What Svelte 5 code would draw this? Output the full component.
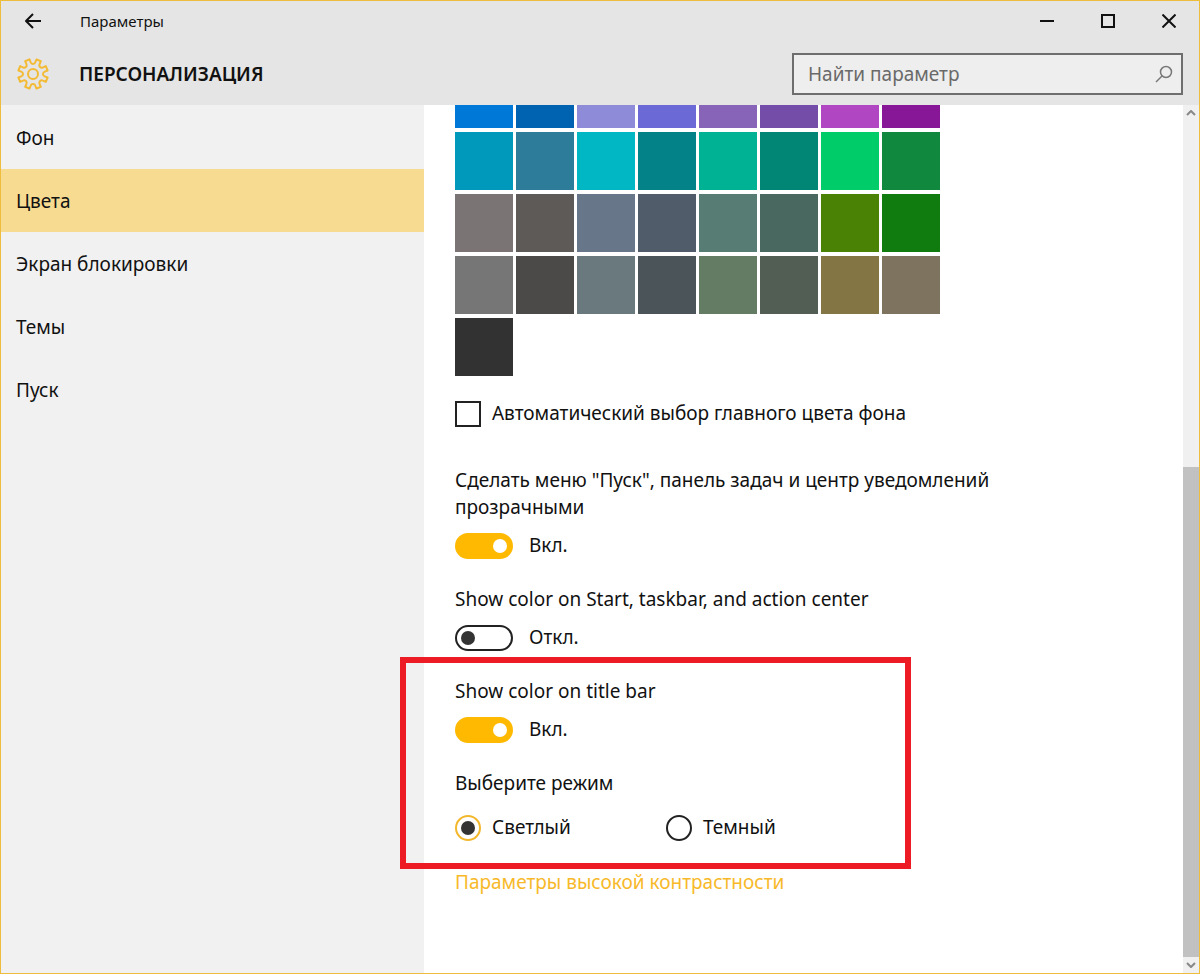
<script lang="ts">
  interface NavItem { id: string; label: string; }

  interface Toggle { id: string; label: string; on: boolean; }

  const navItems: NavItem[] = [
    { id: 'background', label: 'Фон' },
    { id: 'colors', label: 'Цвета' },
    { id: 'lockscreen', label: 'Экран блокировки' },
    { id: 'themes', label: 'Темы' },
    { id: 'start', label: 'Пуск' },
  ];

  const SWATCHES = [
    '#0078d7', '#0063b1', '#8e8cd8', '#6b69d6', '#8764b8', '#744da9', '#b146c2', '#881798',
    '#0099bc', '#2d7d9a', '#00b7c3', '#038387', '#00b294', '#018574', '#00cc6a', '#10893e',
    '#7a7574', '#5d5a58', '#68768a', '#515c6b', '#567c73', '#486860', '#498205', '#107c10',
    '#767676', '#4c4a48', '#69797e', '#4a5459', '#647c64', '#525e54', '#847545', '#7e735f',
    '#323232',
  ];

  const modes = [
    { value: 'light', label: 'Светлый' },
    { value: 'dark', label: 'Темный' },
  ];

  let active = $state('colors');
  let query = $state('');
  let accent = $state('');
  let autoPick = $state(false);
  let mode = $state('light');

  let taskbar = $state<Toggle[]>([
    { id: 'transparent', label: 'Сделать меню "Пуск", панель задач и центр уведомлений прозрачными', on: true },
    { id: 'show-start', label: 'Show color on Start, taskbar, and action center', on: false },
  ]);
  let titleBar = $state<Toggle>({ id: 'show-title', label: 'Show color on title bar', on: true });

  function polar(deg: number, r: number): string {
    const a = (deg * Math.PI) / 180;
    return `${(17 + r * Math.cos(a)).toFixed(2)} ${(17 + r * Math.sin(a)).toFixed(2)}`;
  }

  // eight flat teeth with a round notch between each pair
  function gearPath(): string {
    let d = '';
    for (let i = 0; i < 8; i++) {
      const c = 22.5 + i * 45;
      d += `${i === 0 ? 'M' : 'L'}${polar(c - 11, 12)}L${polar(c - 9, 15)}L${polar(c + 9, 15)}L${polar(c + 11, 12)}`;
      d += `A2.500 2.500 0 0 0 ${polar(c + 34, 12)}`;
    }
    return d + 'Z';
  }
</script>

{#snippet toggleRow(t: Toggle)}
  <div class="setting">
    <label class="setting-label" for={t.id}>{t.label}</label>
    <div class="toggle-row">
      <input class="toggle" type="checkbox" role="switch" id={t.id} bind:checked={t.on} />
      <span>{t.on ? 'Вкл.' : 'Откл.'}</span>
    </div>
  </div>
{/snippet}

<div class="window">
  <header>
    <div class="titlebar">
      <button class="back" aria-label="Назад">
        <svg width="18" height="16" viewBox="0 0 18 16"><path d="M17 8H2M9 1 2 8l7 7" /></svg>
      </button>
      <span class="title">Параметры</span>
      <div class="controls">
        <button aria-label="Свернуть">
          <svg width="14" height="14" viewBox="0 0 14 14"><path d="M0 7h14" /></svg>
        </button>
        <button aria-label="Развернуть">
          <svg width="14" height="14" viewBox="0 0 14 14"><path d="M1 1h12v12H1z" /></svg>
        </button>
        <button aria-label="Закрыть">
          <svg width="14" height="14" viewBox="0 0 14 14"><path d="m.5.5 13 13M13.5.5l-13 13" /></svg>
        </button>
      </div>
    </div>
    <div class="heading">
      <svg class="gear" width="34" height="34" viewBox="0 0 34 34">
        <path d={gearPath()} />
        <circle cx="17" cy="17" r="5" />
      </svg>
      <h1>Персонализация</h1>
      <div class="search">
        <input type="text" aria-label="Найти параметр" placeholder="Найти параметр" bind:value={query} />
        <button aria-label="Поиск">
          <svg width="18" height="18" viewBox="0 0 18 18"><circle cx="11" cy="7" r="5.5" /><path d="M7 11 1 17" /></svg>
        </button>
      </div>
    </div>
  </header>

  <div class="body">
    <nav>
      {#each navItems as item}
        <button class="nav-item" class:active={active === item.id} onclick={() => (active = item.id)}>{item.label}</button>
      {/each}
    </nav>

    <main>
      <div class="swatches">
        {#each SWATCHES as color}
          <button class="swatch" style="background: {color}" aria-label={color} onclick={() => (accent = color)}></button>
        {/each}
      </div>

      <label class="option auto-pick">
        <input type="checkbox" class="box" bind:checked={autoPick} />
        Автоматический выбор главного цвета фона
      </label>

      {#each taskbar as t}
        {@render toggleRow(t)}
      {/each}

      <section class="highlight">
        {@render toggleRow(titleBar)}
        <fieldset>
          <legend>Выберите режим</legend>
          <div class="modes">
            {#each modes as m}
              <label class="option">
                <input type="radio" class="radio" name="mode" value={m.value} bind:group={mode} />
                {m.label}
              </label>
            {/each}
          </div>
        </fieldset>
      </section>

      <a href="#contrast">Параметры высокой контрастности</a>
    </main>

    <div class="scrollbar">
      <button aria-label="Вверх">
        <svg width="10" height="6" viewBox="0 0 10 6"><path d="m1 5 4-4 4 4" /></svg>
      </button>
      <div class="track"><div class="thumb"></div></div>
      <button aria-label="Вниз">
        <svg width="10" height="6" viewBox="0 0 10 6"><path d="m1 1 4 4 4-4" /></svg>
      </button>
    </div>
  </div>
</div>

<style>
  :global(body) { margin: 0; }
  .window {
    display: flex;
    flex-direction: column;
    box-sizing: border-box;
    min-height: 100vh;
    border: 1px solid #efbd3d;
    background: #fff;
    color: #111;
    font-family: 'Noto Sans', 'Open Sans', sans-serif;
    font-size: 19px;
    line-height: 27px;
  }
  button, input {
    margin: 0;
    padding: 0;
    border: none;
    background: none;
    color: inherit;
    font: inherit;
  }
  svg {
    display: block;
    fill: none;
    stroke: currentColor;
    stroke-width: 2;
    stroke-linejoin: round;
  }
  header { background: #e5e5e5; }
  .titlebar {
    display: flex;
    align-items: center;
    height: 40px;
  }
  .back, .controls button {
    display: flex;
    align-items: center;
    justify-content: center;
    height: 100%;
  }
  .back { width: 64px; }
  .title {
    flex: 1;
    padding-left: 15px;
    font-size: 15px;
  }
  .controls {
    display: flex;
    height: 100%;
  }
  .controls button { width: 61px; }
  .controls svg { stroke-linejoin: miter; }
  .heading {
    display: flex;
    align-items: center;
    box-sizing: border-box;
    height: 64px;
    padding: 2px 16px 0 15px;
  }
  .gear { color: #f3bb35; }
  h1 {
    flex: 1;
    margin: 0 0 0 29px;
    font-size: 19px;
    font-weight: 600;
    text-transform: uppercase;
  }
  .search {
    display: flex;
    align-items: center;
    box-sizing: border-box;
    width: 391px;
    height: 42px;
    border: 2px solid #6e6e6e;
    background: #eee;
    color: #777;
  }
  .search input {
    flex: 1;
    min-width: 0;
    padding-left: 14px;
    outline: none;
  }
  .search input::placeholder {
    color: #6a6a6a;
    opacity: 1;
  }
  .search button { padding: 8px; }
  .search svg { stroke-width: 1.5; }
  .body {
    display: flex;
    flex: 1;
  }
  nav {
    display: flex;
    flex-direction: column;
    width: 423px;
    flex-shrink: 0;
    padding-top: 1px;
    background: #f1f1f1;
  }
  .nav-item {
    height: 63px;
    padding: 2px 15px 0;
    text-align: left;
  }
  .nav-item.active { background: #f7db91; }
  main {
    flex: 1;
    padding: 0 31px 64px;
  }
  /* the first row is scrolled halfway under the header */
  .swatches {
    display: grid;
    grid-template-columns: repeat(8, 58px);
    grid-template-rows: 23px;
    grid-auto-rows: 58px;
    gap: 4px 3px;
  }
  .option {
    display: flex;
    align-items: center;
    gap: 11px;
  }
  .auto-pick { margin: 24px 0 40px; }
  .box, .radio, .toggle {
    appearance: none;
    box-sizing: border-box;
    flex-shrink: 0;
    width: 26px;
    height: 26px;
    border: 2px solid #222;
  }
  .box:checked { background: #ffb900; }
  .radio, .toggle {
    display: flex;
    align-items: center;
    border-radius: 13px;
  }
  .radio { justify-content: center; }
  .radio:checked { border-color: #f3b72c; }
  .radio:checked::before, .toggle::before {
    content: '';
    width: 14px;
    height: 14px;
    border-radius: 50%;
    background: #333;
  }
  .toggle {
    width: 58px;
    padding: 0 4px;
  }
  .toggle:checked {
    justify-content: flex-end;
    border-color: #ffb900;
    background: #ffb900;
  }
  .toggle:checked::before { background: #fff; }
  .setting { margin-bottom: 27px; }
  .setting-label {
    display: block;
    max-width: 560px;
    margin-bottom: 11px;
  }
  .toggle-row {
    display: flex;
    align-items: center;
    gap: 16px;
  }
  .highlight { position: relative; }
  .highlight::after {
    content: '';
    position: absolute;
    inset: -21px auto -28px -55px;
    box-sizing: border-box;
    width: 511px;
    border: 6px solid #ed1c24;
    pointer-events: none;
  }
  fieldset {
    margin: 0 0 28px;
    padding: 0;
    border: none;
  }
  legend {
    margin-bottom: 17px;
    padding: 0;
  }
  .modes { display: flex; }
  .modes .option { width: 211px; }
  a {
    color: #f7b92a;
    text-decoration: none;
  }
  .scrollbar {
    display: flex;
    flex-direction: column;
    width: 16px;
    background: #f0f0f0;
    color: #888;
  }
  .scrollbar button {
    display: flex;
    align-items: center;
    justify-content: center;
    height: 16px;
  }
  .track {
    display: flex;
    flex: 1;
    flex-direction: column;
    justify-content: flex-end;
  }
  .thumb {
    height: 58.6%;
    background: #c1c1c1;
  }
</style>
